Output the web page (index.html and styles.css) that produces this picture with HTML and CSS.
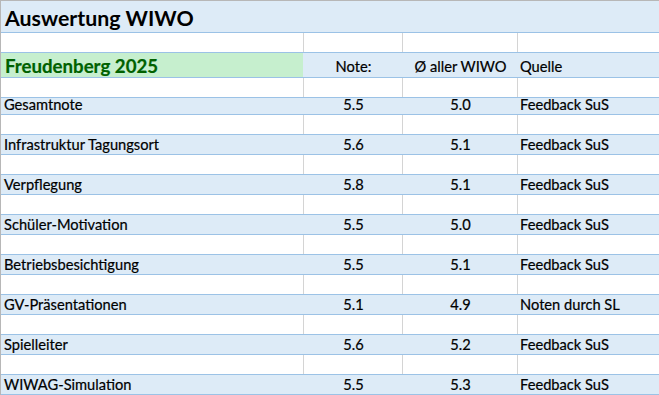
FILE: index.html
```html
<!DOCTYPE html>
<html lang="de">
<head>
<meta charset="utf-8">
<title>Auswertung WIWO</title>
<link rel="stylesheet" href="styles.css">
</head>
<body>
<div class="sheet">
  <div class="row row-title blue">
    <div class="cell c-a title">Auswertung WIWO</div>
  </div>
  <div class="row row-blank grid">
    <div class="cell c-a"></div><div class="cell c-b"></div><div class="cell c-c"></div><div class="cell c-d"></div>
  </div>
  <div class="row row-head blue">
    <div class="cell c-a green">Freudenberg 2025</div>
    <div class="cell c-b center">Note:</div>
    <div class="cell c-c center">Ø aller WIWO</div>
    <div class="cell c-d">Quelle</div>
  </div>
  <div class="row row-blank grid">
    <div class="cell c-a"></div><div class="cell c-b"></div><div class="cell c-c"></div><div class="cell c-d"></div>
  </div>
  <div class="row row-data row-first blue">
    <div class="cell c-a">Gesamtnote</div>
    <div class="cell c-b center">5.5</div>
    <div class="cell c-c center">5.0</div>
    <div class="cell c-d">Feedback SuS</div>
  </div>
  <div class="row row-blank grid">
    <div class="cell c-a"></div><div class="cell c-b"></div><div class="cell c-c"></div><div class="cell c-d"></div>
  </div>
  <div class="row row-data blue">
    <div class="cell c-a">Infrastruktur Tagungsort</div>
    <div class="cell c-b center">5.6</div>
    <div class="cell c-c center">5.1</div>
    <div class="cell c-d">Feedback SuS</div>
  </div>
  <div class="row row-blank grid">
    <div class="cell c-a"></div><div class="cell c-b"></div><div class="cell c-c"></div><div class="cell c-d"></div>
  </div>
  <div class="row row-data blue">
    <div class="cell c-a">Verpflegung</div>
    <div class="cell c-b center">5.8</div>
    <div class="cell c-c center">5.1</div>
    <div class="cell c-d">Feedback SuS</div>
  </div>
  <div class="row row-blank grid">
    <div class="cell c-a"></div><div class="cell c-b"></div><div class="cell c-c"></div><div class="cell c-d"></div>
  </div>
  <div class="row row-data blue">
    <div class="cell c-a">Schüler-Motivation</div>
    <div class="cell c-b center">5.5</div>
    <div class="cell c-c center">5.0</div>
    <div class="cell c-d">Feedback SuS</div>
  </div>
  <div class="row row-blank grid">
    <div class="cell c-a"></div><div class="cell c-b"></div><div class="cell c-c"></div><div class="cell c-d"></div>
  </div>
  <div class="row row-data blue">
    <div class="cell c-a">Betriebsbesichtigung</div>
    <div class="cell c-b center">5.5</div>
    <div class="cell c-c center">5.1</div>
    <div class="cell c-d">Feedback SuS</div>
  </div>
  <div class="row row-blank grid">
    <div class="cell c-a"></div><div class="cell c-b"></div><div class="cell c-c"></div><div class="cell c-d"></div>
  </div>
  <div class="row row-data blue">
    <div class="cell c-a">GV-Präsentationen</div>
    <div class="cell c-b center">5.1</div>
    <div class="cell c-c center">4.9</div>
    <div class="cell c-d">Noten durch SL</div>
  </div>
  <div class="row row-blank grid">
    <div class="cell c-a"></div><div class="cell c-b"></div><div class="cell c-c"></div><div class="cell c-d"></div>
  </div>
  <div class="row row-data blue">
    <div class="cell c-a">Spielleiter</div>
    <div class="cell c-b center">5.6</div>
    <div class="cell c-c center">5.2</div>
    <div class="cell c-d">Feedback SuS</div>
  </div>
  <div class="row row-blank grid">
    <div class="cell c-a"></div><div class="cell c-b"></div><div class="cell c-c"></div><div class="cell c-d"></div>
  </div>
  <div class="row row-data blue">
    <div class="cell c-a">WIWAG-Simulation</div>
    <div class="cell c-b center">5.5</div>
    <div class="cell c-c center">5.3</div>
    <div class="cell c-d">Feedback SuS</div>
  </div>
</div>
</body>
</html>
```
FILE: styles.css
```css
* { box-sizing: border-box; }
html, body { margin: 0; padding: 0; background: #fff; }
body {
  font-family: Lato, "Liberation Sans", sans-serif;
  font-size: 14.67px;
  color: #000;
  overflow: hidden;
}
.sheet {
  width: 659px;
  height: 395px;
  border-top: 1px solid #b7b7b7;
  border-left: 1px solid #b7b7b7;
  overflow: hidden;
}
.row {
  display: grid;
  grid-template-columns: 303px 99px 115px 1fr;
  border-bottom: 1px solid #9bc2e6;
}
.blue { background: #ddebf7; }
.row-title { height: 32px; }
.row-blank { height: 20px; }
.row-head { height: 25px; }
.row-data { height: 20px; }
.row-first { height: 17px; }
.cell {
  display: flex;
  align-items: flex-end;
  white-space: nowrap;
  line-height: 16px;
  padding: 0 0 1px 3px;
  -webkit-text-stroke: 0.2px #000;
}
.grid .c-a, .grid .c-b, .grid .c-c { border-right: 1px solid #d4d4d4; }
.c-a.green { margin-right: 1px; }
.c-d { padding-left: 2px; }
.center { justify-content: center; padding-left: 0; }
.row-first .cell { line-height: 14px; padding-bottom: 2px; }
.title {
  grid-column: 1 / -1;
  font-size: 21.33px;
  font-weight: 700;
  line-height: 24px;
  padding-bottom: 2px;
  padding-left: 4px;
  -webkit-text-stroke: 0;
}
.green {
  background: #c6efce;
  color: #006100;
  font-size: 18.67px;
  font-weight: 700;
  line-height: 20px;
  padding-left: 4px;
  -webkit-text-stroke: 0.2px #006100;
}
.row-head .cell { padding-bottom: 2px; }
.row-head .green { padding-bottom: 1px; }
```
